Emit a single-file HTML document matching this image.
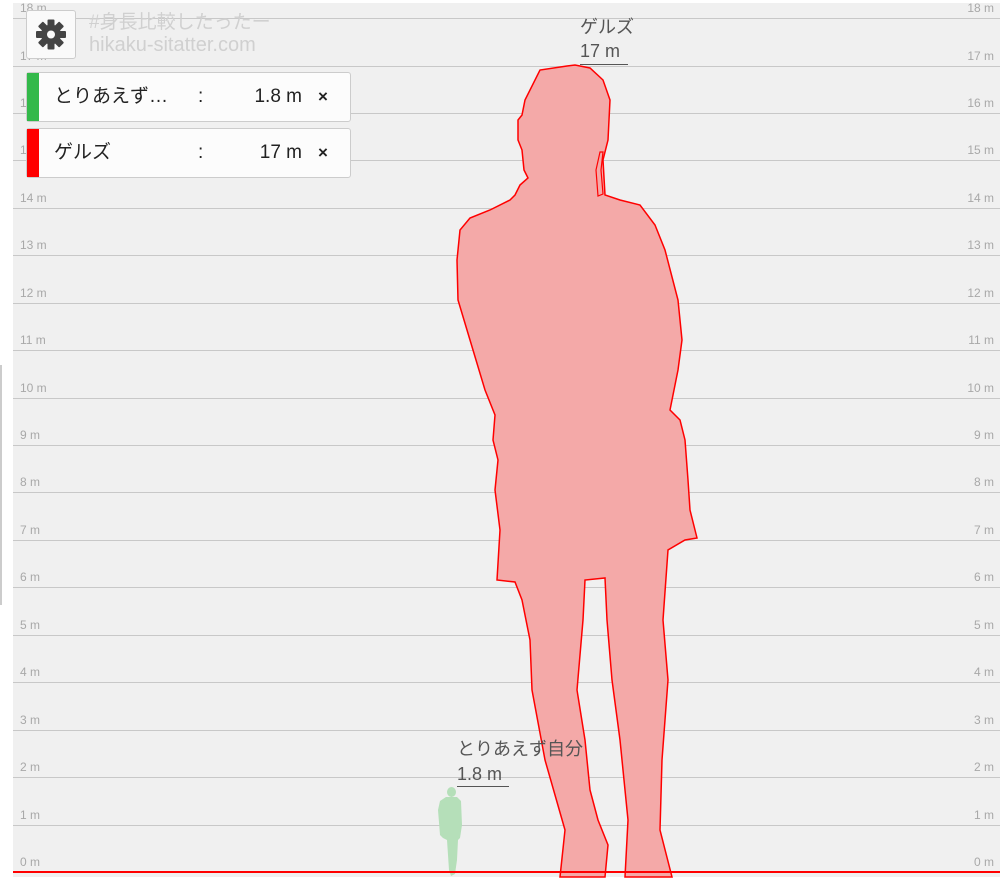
<!DOCTYPE html>
<html><head><meta charset="utf-8"><style>
body{margin:0;width:1005px;height:889px;background:#fff;position:relative;overflow:hidden;font-family:"Liberation Sans","Noto Sans CJK JP",sans-serif}
#bg{position:absolute;left:13px;top:3px;width:987px;height:874px;background:#f0f0f0}
.l{position:absolute;left:13px;width:987px;height:1px;background:#c8c8c8}
.lb{position:absolute;font-size:12px;color:#a8a8a8;line-height:14px}
.card{position:absolute;left:26px;width:323px;height:48px;background:#fcfcfc;border:1px solid #ccc;border-radius:3px;font-size:19px;color:#222}
.card .bar{position:absolute;left:0;top:0;width:12px;height:48px}
.card span{position:absolute;top:13px;line-height:22px}
.nm{position:absolute;font-size:18px;color:#555;line-height:20px}
</style></head><body>
<div id="bg"></div>
<div style="position:absolute;left:0;top:365px;width:2px;height:240px;background:#ccc"></div>
<div id="grid"></div>
<script>
var g='';for(var k=0;k<=18;k++){var y=Math.round(872-47.44*k);
if(k>0)g+='<div class="l" style="top:'+y+'px"></div>';
g+='<div class="lb" style="left:20px;top:'+(y-17)+'px">'+k+' m</div><div class="lb" style="right:11px;text-align:right;top:'+(y-17)+'px">'+k+' m</div>';}
document.getElementById('grid').innerHTML=g;
</script>
<div style="position:absolute;left:13px;top:871px;width:987px;height:2px;background:#f00;z-index:3"></div>
<svg style="position:absolute;left:0;top:0" width="1005" height="889">
<path d="M567,66 L575,65 590,68 603,80 610,100 608,140 603,160 605,195 620,200 640,205 655,225 665,250 678,300 682,340 678,370 670,410 680,420 685,440 688,480 690,510 697,538 685,540 668,550 663,620 668,680 662,760 660,830 672,877 625,877 628,820 620,740 612,680 607,620 605,578 585,580 583,620 577,690 585,740 590,790 598,820 608,845 605,877 560,877 565,830 545,760 532,690 530,640 522,600 515,582 497,580 500,530 495,490 498,460 493,440 495,415 485,390 470,340 458,300 457,260 460,230 470,218 490,210 510,200 515,195 520,185 528,178 524,170 522,150 518,140 518,120 522,115 525,100 540,70 Z" fill="#f4a9a8" stroke="#f00" stroke-width="1.5"/>
<path d="M600,152 L596,170 598,196 603,194 601,170 603,152 Z" fill="none" stroke="#f00" stroke-width="1.2"/>
<path d="M446,797 L457,797 461,801 462,825 460,838 458,840 457,860 455,874 451,876 449,870 447,840 443,838 440,835 438,810 440,801 Z" fill="#b5dfb9"/>
<ellipse cx="451.5" cy="792" rx="4.5" ry="5" fill="#b5dfb9"/>
</svg>
<div class="nm" style="left:580px;top:17px">ゲルズ</div>
<div class="nm" style="left:580px;top:41px">17 m</div>
<div style="position:absolute;left:580px;top:64px;width:48px;height:1px;background:#555"></div>
<div class="nm" style="left:457px;top:739px">とりあえず自分</div>
<div class="nm" style="left:457px;top:764px">1.8 m</div>
<div style="position:absolute;left:457px;top:786px;width:52px;height:1px;background:#555"></div>
<div style="position:absolute;left:26px;top:10px;width:48px;height:47px;background:#fafafa;border:1px solid #ccc;border-radius:3px;z-index:4">
<svg width="48" height="47" viewBox="0 0 48 47"><g transform="translate(24,23.5)" fill="#444"><circle r="10"/><g id="t"><rect x="-3.5" y="-15" width="7" height="7" rx="1"/></g><use href="#t" transform="rotate(45)"/><use href="#t" transform="rotate(90)"/><use href="#t" transform="rotate(135)"/><use href="#t" transform="rotate(180)"/><use href="#t" transform="rotate(225)"/><use href="#t" transform="rotate(270)"/><use href="#t" transform="rotate(315)"/><circle r="4" fill="#fafafa"/></g></svg></div>
<div style="position:absolute;left:89px;top:12px;font-size:19px;color:#d0d0d0;line-height:22px;z-index:4">#身長比較したったー<br><span style="font-size:20px">hikaku-sitatter.com</span></div>
<div class="card" style="top:72px;z-index:4"><div class="bar" style="background:#33b94a"></div><span style="left:27px">とりあえず…</span><span style="left:171px">:</span><span style="right:48px">1.8 m</span><span style="left:291px;font-weight:bold;font-size:17px">×</span></div>
<div class="card" style="top:128px;z-index:4"><div class="bar" style="background:#f00"></div><span style="left:27px">ゲルズ</span><span style="left:171px">:</span><span style="right:48px">17 m</span><span style="left:291px;font-weight:bold;font-size:17px">×</span></div>
</body></html>
